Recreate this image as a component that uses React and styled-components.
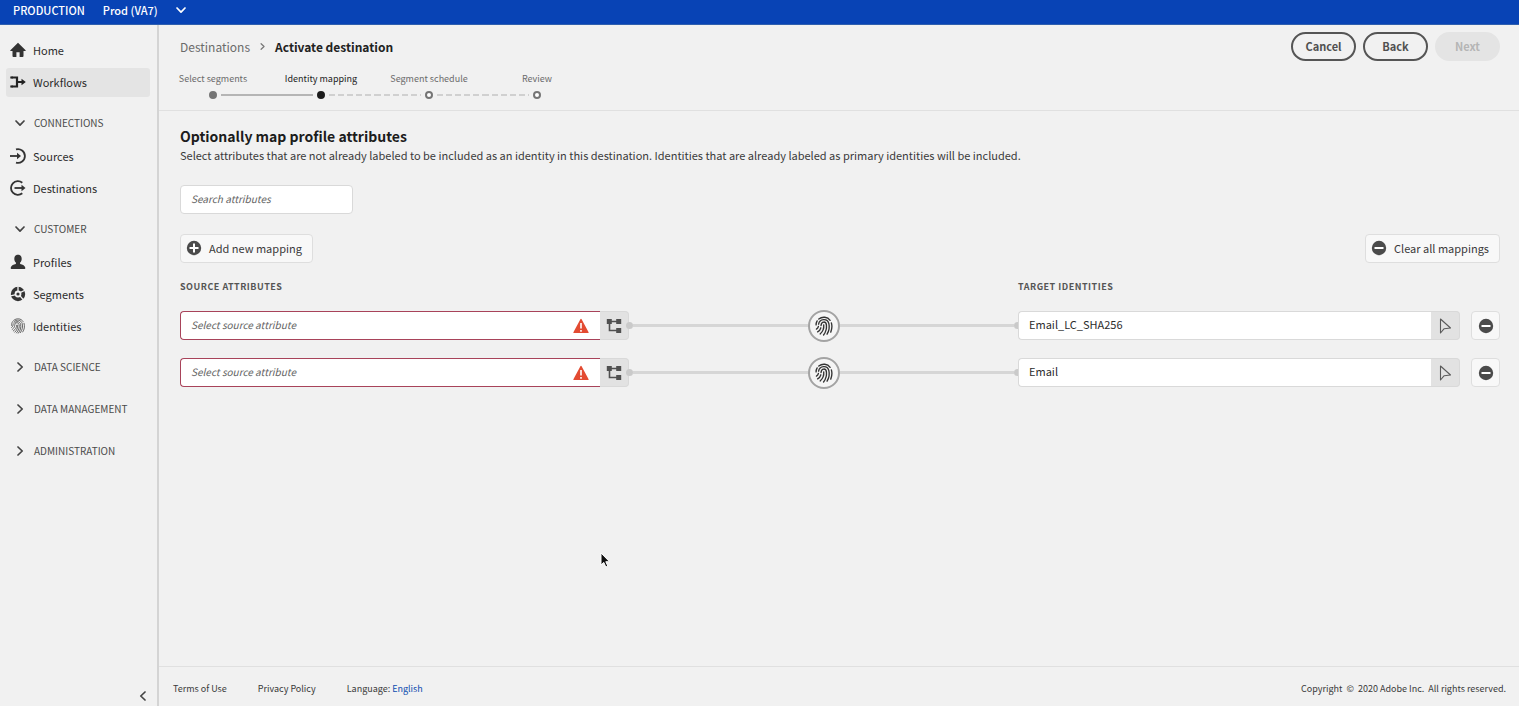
import React from "react";
import styled, { createGlobalStyle, css } from "styled-components";

const GlobalStyle = createGlobalStyle`
  * { box-sizing: border-box; }
  body {
    margin: 0;
    background: #f1f1f1;
    color: #3a3a3a;
    font-family: "Noto Sans CJK SC", "Noto Sans", sans-serif;
    font-size: 11px;
    line-height: 18px;
  }
  button, input { font: inherit; color: inherit; }
  button { cursor: pointer; }
  svg { display: block; flex: none; }
`;

const Page = styled.div`
  min-height: 100vh;
  display: flex;
  flex-direction: column;
`;

const TopBar = styled.header`
  display: flex;
  align-items: center;
  gap: 18px;
  height: 25px;
  padding: 0 13px 4px;
  background: #0843b5;
  border-bottom: 1px solid #2f5fae;
  color: #fff;
  font-weight: 500;
`;

const SandboxButton = styled.button`
  display: flex;
  align-items: center;
  gap: 18px;
  padding: 0;
  border: 0;
  background: none;
`;

const Body = styled.div`
  flex: 1;
  display: flex;
`;

const Sidebar = styled.nav`
  flex: none;
  display: flex;
  flex-direction: column;
  width: 159px;
  padding: 11px 7px 2px 6px;
  border-right: 2px solid #d4d4d4;
`;

const NavList = styled.ul`
  display: flex;
  flex-direction: column;
  gap: 3px;
  margin: 0;
  padding: 0 0 3px;
  list-style: none;
`;

const NavLink = styled.a`
  display: flex;
  align-items: center;
  gap: 7px;
  height: 29px;
  padding: 0 4px 2px;
  border-radius: 3px;
  background: ${(p) => (p.$active ? "#e4e4e4" : "transparent")};
  color: #2c2c2c;
  text-decoration: none;
`;

const SectionToggle = styled.button`
  display: flex;
  align-items: center;
  gap: 9px;
  width: 100%;
  height: 38px;
  margin-top: 4px;
  padding: 0 9px;
  border: 0;
  background: none;
  color: #4b4b4b;
  font-size: 10px;
  white-space: nowrap;
`;

const CollapseButton = styled.button`
  align-self: flex-end;
  margin-top: auto;
  padding: 3px 2px;
  border: 0;
  background: none;
`;

const Main = styled.div`
  flex: 1;
  min-width: 0;
  display: flex;
  flex-direction: column;
`;

const PageHeader = styled.div`
  display: flex;
  justify-content: space-between;
  padding: 7px 19px 11px 0;
  border-bottom: 1px solid #e0e0e0;
`;

const Breadcrumb = styled.div`
  display: flex;
  align-items: center;
  gap: 9px;
  height: 29px;
  padding-left: 21px;
`;

const CrumbLink = styled.a`
  color: #6b6b6b;
  font-size: 12px;
  text-decoration: none;
`;

const CrumbTitle = styled.h1`
  margin: 0;
  color: #222;
  font-size: 12px;
  line-height: 18px;
  font-weight: 700;
`;

const Stepper = styled.ol`
  display: flex;
  margin: 0;
  padding: 11px 0 0;
  list-style: none;
`;

const Step = styled.li`
  display: flex;
  flex-direction: column;
  align-items: center;
  gap: 5px;
  width: 108px;
  color: ${(p) => (p.$state === "current" ? "#222" : "#6b6b6b")};
  font-size: 9px;
  line-height: 14px;
  white-space: nowrap;
`;

const Track = styled.div`
  display: flex;
  align-items: center;
  gap: 4px;
  width: 100%;
`;

const lineFill = {
  none: "transparent",
  done: "#b5b5b5",
  todo: "repeating-linear-gradient(90deg, #d0d0d0 0 6px, transparent 6px 9px)",
};

const TrackLine = styled.span`
  flex: 1;
  height: 2px;
  background: ${(p) => lineFill[p.$kind]};
`;

const StepDot = styled.span`
  width: 8px;
  height: 8px;
  border: 2px solid ${(p) => (p.$state === "current" ? "#1c1c1c" : "#757575")};
  border-radius: 50%;
  background: ${(p) => ({ done: "#757575", current: "#1c1c1c", todo: "#fff" })[p.$state]};
`;

const Actions = styled.div`
  display: flex;
  gap: 7px;
`;

const PillButton = styled.button`
  width: 65px;
  height: 29px;
  padding: 0 0 1px;
  border: 2px solid #555;
  border-radius: 15px;
  background: transparent;
  color: #505050;
  font-weight: 700;
  &:disabled {
    border-color: #e4e4e4;
    background: #e4e4e4;
    color: #b5b5b5;
    cursor: default;
  }
`;

const Content = styled.main`
  flex: 1;
  padding: 15px 19px 24px 21px;
`;

const Title = styled.h2`
  margin: 0;
  color: #1c1c1c;
  font-size: 14px;
  line-height: 20px;
  font-weight: 700;
`;

const Description = styled.p`
  margin: 0;
`;

const field = css`
  height: 29px;
  padding: 0 10px 3px;
  border: 1px solid #d9d9d9;
  background: #fff;
  color: #2c2c2c;
  outline: 0;
  &::placeholder {
    color: #636363;
    font-size: 10px;
    font-style: italic;
    opacity: 1;
  }
`;

const SearchInput = styled.input`
  ${field}
  display: block;
  width: 173px;
  margin-top: 21px;
  border-radius: 4px;
`;

const Toolbar = styled.div`
  display: flex;
  justify-content: space-between;
  margin-top: 20px;
`;

const ToolButton = styled.button`
  display: flex;
  align-items: center;
  justify-content: center;
  gap: 7px;
  height: 29px;
  min-width: 29px;
  padding: ${(p) => (p.$square ? "0" : "0 10px 2px 5px")};
  border: 1px solid #dedede;
  border-radius: 4px;
  background: #f8f8f8;
  color: #3a3a3a;
`;

const MappingRow = styled.div`
  display: grid;
  grid-template-columns: minmax(0, 449fr) minmax(0, 389fr) minmax(0, 442fr) 40px;
  align-items: center;
  margin-top: 18px;
`;

const ColumnTitle = styled.h3`
  grid-column: ${(p) => p.$column};
  margin: 0;
  color: #555;
  font-size: 9px;
  line-height: 12px;
  font-weight: 700;
  letter-spacing: 0.5px;
`;

const FieldGroup = styled.div`
  display: flex;
`;

const InvalidBox = styled.div`
  flex: 1;
  min-width: 0;
  display: flex;
  align-items: center;
  height: 29px;
  padding-right: 11px;
  border: 1px solid #a8435a;
  border-right: 0;
  border-radius: 4px 0 0 4px;
  background: #fff;
`;

const SourceInput = styled.input`
  ${field}
  flex: 1;
  min-width: 0;
  height: 27px;
  border: 0;
  background: transparent;
`;

const TargetInput = styled.input`
  ${field}
  flex: 1;
  min-width: 0;
  border-right: 0;
  border-radius: 4px 0 0 4px;
`;

const PickerButton = styled.button`
  display: flex;
  align-items: center;
  justify-content: center;
  width: 29px;
  height: 29px;
  padding: 0;
  border: 1px solid #d9d9d9;
  border-left: 0;
  border-radius: 0 4px 4px 0;
  background: #e2e2e2;
`;

const Connector = styled.div`
  display: flex;
  align-items: center;
  margin: -2px -3px;
`;

const ConnectorLine = styled.span`
  flex: 1;
  height: 3px;
  background: #d6d6d6;
`;

const ConnectorEnd = styled.span`
  width: 7px;
  height: 7px;
  border-radius: 50%;
  background: #cacaca;
`;

const ConnectorBadge = styled.span`
  display: flex;
  align-items: center;
  justify-content: center;
  width: 32px;
  height: 32px;
  border: 2px solid #a3a3a3;
  border-radius: 50%;
  background: #f5f5f5;
`;

const RemoveCell = styled.div`
  display: flex;
  justify-content: flex-end;
`;

const Footer = styled.footer`
  display: flex;
  align-items: center;
  gap: 31px;
  height: 40px;
  padding: 4px 13px 0 14px;
  border-top: 1px solid #e0e0e0;
  font-size: 9px;
`;

const FooterLink = styled.a`
  color: ${(p) => (p.$accent ? "#0f4db0" : "inherit")};
  text-decoration: none;
`;

const Copyright = styled.span`
  margin-left: auto;
`;

const Pointer = styled.svg`
  position: absolute;
  left: 599px;
  top: 551px;
  pointer-events: none;
`;

const Chevron = ({ dir = "down", size = 10, color = "#444", width = 1.7 }) => {
  const d = {
    down: "M1 3 5 7.200 9 3",
    right: "M3 1 7.200 5 3 9",
    left: "M7 1 2.800 5 7 9",
  }[dir];
  return (
    <svg width={size} height={size} viewBox="0 0 10 10" fill="none" stroke={color} strokeWidth={width} strokeLinecap="round" strokeLinejoin="round" aria-hidden="true">
      <path d={d} />
    </svg>
  );
};

const Icon = ({ size = 16, children }) => (
  <svg width={size} height={size} viewBox="0 0 16 16" fill="#333" aria-hidden="true">
    {children}
  </svg>
);

const HomeIcon = () => (
  <Icon>
    <path d="M8 .8.400 8.300c-.3.4-.1.8.4.8H2.500V14c0 .6.300.9.9.9h3V10.200h3.200v4.700h3c.6 0 .9-.3.9-.9V9.100h1.700c.5 0 .7-.4.4-.8Z" />
  </Icon>
);

const WorkflowIcon = () => (
  <Icon>
    <path d="M1.500 3.500H7v9H1.500M7 8h5" fill="none" stroke="#222" strokeWidth="2.200" />
    <path d="M11.500 4.800 15.800 8 11.500 11.200ZM.3 2.400h2.500v2.200H.3Zm0 9h2.500v2.200H.3Z" fill="#222" />
  </Icon>
);

const SourcesIcon = () => (
  <Icon>
    <path d="M6 1.400A6.900 6.900 0 1 1 6 14.600" fill="none" stroke="#333" strokeWidth="1.800" />
    <path d="M0 8h8" stroke="#333" strokeWidth="1.800" />
    <path d="m7 4.700 4 3.300-4 3.300Z" />
  </Icon>
);

const DestinationsIcon = () => (
  <Icon>
    <path d="M12.300 2.700A6.900 6.900 0 1 0 12.300 13.300" fill="none" stroke="#333" strokeWidth="1.800" />
    <path d="M4.500 8h8" stroke="#333" strokeWidth="1.800" />
    <path d="m11.500 4.700 4 3.300-4 3.300Z" />
  </Icon>
);

const ProfileIcon = () => (
  <Icon>
    <path d="M8 .8c2.300 0 3.700 1.600 3.700 3.900 0 1.600-.6 3-1.600 3.900v1.300c2.600.5 5 1.700 5.200 3.800v.6c0 .4-.3.700-.7.700H1.400c-.4 0-.7-.3-.7-.7v-.6c.2-2.100 2.600-3.300 5.200-3.800V8.600c-1-.9-1.600-2.300-1.600-3.900C4.300 2.400 5.700.8 8 .8Z" />
  </Icon>
);

const SegmentsIcon = () => (
  <Icon>
    <circle cx="8" cy="8" r="5.300" fill="none" stroke="#333" strokeWidth="3.800" />
    <path d="M8 5V0M10 6.600l5.500-2.600M10 9.800l3.600 4.200M6 8.600.5 9.800" fill="none" stroke="#f1f1f1" strokeWidth="1.300" />
    <circle cx="8" cy="8" r="1.600" />
  </Icon>
);

const IdentitiesIcon = () => (
  <svg width="16" height="16" viewBox="0 0 20 22" fill="none" stroke="#444" strokeWidth="1.100" strokeLinecap="round" aria-hidden="true">
    <path d="M4 3.200C8-.1 14.300.3 17 4.800M18.300 7.200c1.300 4.300.5 8.800-1.800 12" />
    <path d="M1.200 10.200c-.1-2 .3-3.700 1.300-5.200M4.300 5.300c3.800-4.100 10.100-2.800 11.500 2.400 1.100 4.300.2 8.800-2.600 12.500" />
    <path d="M1.300 13c2-1.300 1.800-3.300 2.100-5M5 6.900c2.900-3.300 7.700-2.300 8.600 1.700.9 4.300-.3 8.700-3.200 12.300" />
    <path d="M2 15.700c3.800-2.500 3.200-4.900 3.700-6.800 1-3.200 5-3 5.800.2.900 3.600-.5 8.200-3.600 11.400" />
    <path d="M3.500 17.800c4-2.900 4.400-5.200 4.500-7.500 0-1.200 1.400-1.100 1.500 0 .3 3.300-1 6.700-3.900 9.200" />
  </svg>
);

const FingerprintIcon = () => (
  <svg width="18" height="20" viewBox="0 0 20 22" fill="none" stroke="#333" strokeWidth="1.500" strokeLinecap="round" aria-hidden="true">
    <path d="M4.200 3.200C8 .2 14 .6 16.800 4.700M18.200 7.500c1 3.500.6 7.200-.7 10.300" />
    <path d="M1.200 9.800c0-1.700.4-3.200 1.200-4.500M4 9C5 2.600 13.800 2 15.400 8.300c1 4.200.1 8.300-2 11.800" />
    <path d="M3.800 11.500c-.2 1.200-.9 2.200-2.200 3M6.700 10.500c.2-5 5.600-5.200 6 -.5.4 4.100-.8 7.900-3.200 11" />
    <path d="M6.500 13c-.5 1.900-1.700 3.400-3.600 4.500M9.700 9.800c.4 3.900-1.100 7.500-4 10" />
  </svg>
);

const CircleIcon = ({ plus }) => (
  <Icon>
    <circle cx="8" cy="8" r="7.200" fill="#4b4b4b" />
    <path d={plus ? "M3.500 8h9M8 3.500v9" : "M3.500 8h9"} stroke="#fff" strokeWidth="2" />
  </Icon>
);

const AlertIcon = () => (
  <Icon>
    <path d="M8 .8c.3 0 .5.200.6.400l7 13c.2.400 0 .8-.5.8H.9c-.5 0-.7-.4-.5-.8l7-13c.1-.2.300-.4.6-.4Z" fill="#e34b32" />
    <path d="M8 5v5.500M8 12v1.700" stroke="#fff" strokeWidth="1.600" />
  </Icon>
);

const TreeIcon = () => (
  <Icon>
    <path d="M3.500 3.500h9M3.500 3.500v9h9" fill="none" stroke="#505050" strokeWidth="1.600" />
    <path d="M.8 1h5v5h-5Zm9.400 0h5v5h-5Zm0 9h5v5h-5Z" fill="#505050" />
  </Icon>
);

const SelectIcon = () => (
  <Icon>
    <path d="M3.500 1v14l3.700-4.300 6.300-.7Z" fill="none" stroke="#5a5a5a" strokeWidth="1.100" strokeLinejoin="round" />
  </Icon>
);

const navSections = [
  { title: "CONNECTIONS", items: [["Sources", SourcesIcon], ["Destinations", DestinationsIcon]] },
  { title: "CUSTOMER", items: [["Profiles", ProfileIcon], ["Segments", SegmentsIcon], ["Identities", IdentitiesIcon]] },
  { title: "DATA SCIENCE" },
  { title: "DATA MANAGEMENT" },
  { title: "ADMINISTRATION" },
];

const steps = [
  { label: "Select segments", state: "done", before: "none", after: "done" },
  { label: "Identity mapping", state: "current", before: "done", after: "todo" },
  { label: "Segment schedule", state: "todo", before: "todo", after: "todo" },
  { label: "Review", state: "todo", before: "todo", after: "none" },
];

const NavItem = ({ label, icon: Glyph, active }) => (
  <li>
    <NavLink href="#" $active={active} aria-current={active ? "page" : undefined}>
      <Glyph />
      {label}
    </NavLink>
  </li>
);

const Mapping = ({ target }) => (
  <MappingRow>
    <FieldGroup>
      <InvalidBox>
        <SourceInput placeholder="Select source attribute" aria-label={`Source attribute for ${target}`} aria-invalid="true" />
        <AlertIcon />
      </InvalidBox>
      <PickerButton aria-label="Browse source attributes"><TreeIcon /></PickerButton>
    </FieldGroup>
    <Connector>
      <ConnectorEnd />
      <ConnectorLine />
      <ConnectorBadge><FingerprintIcon /></ConnectorBadge>
      <ConnectorLine />
      <ConnectorEnd />
    </Connector>
    <FieldGroup>
      <TargetInput defaultValue={target} aria-label="Target identity" />
      <PickerButton aria-label="Select target identity"><SelectIcon /></PickerButton>
    </FieldGroup>
    <RemoveCell>
      <ToolButton $square aria-label={`Remove ${target} mapping`}><CircleIcon /></ToolButton>
    </RemoveCell>
  </MappingRow>
);

export default function App() {
  return (
    <Page>
      <GlobalStyle />
      <TopBar>
        <span>PRODUCTION</span>
        <SandboxButton>
          Prod (VA7)
          <Chevron color="#fff" />
        </SandboxButton>
      </TopBar>
      <Body>
        <Sidebar>
          <NavList>
            <NavItem label="Home" icon={HomeIcon} />
            <NavItem label="Workflows" icon={WorkflowIcon} active />
          </NavList>
          {navSections.map(({ title, items }) => (
            <React.Fragment key={title}>
              <SectionToggle aria-expanded={Boolean(items)}>
                <Chevron dir={items ? "down" : "right"} />
                {title}
              </SectionToggle>
              {items && (
                <NavList>
                  {items.map(([label, icon]) => <NavItem key={label} label={label} icon={icon} />)}
                </NavList>
              )}
            </React.Fragment>
          ))}
          <CollapseButton aria-label="Collapse navigation"><Chevron dir="left" /></CollapseButton>
        </Sidebar>
        <Main>
          <PageHeader>
            <div>
              <Breadcrumb>
                <CrumbLink href="#">Destinations</CrumbLink>
                <Chevron dir="right" size={7} color="#777" />
                <CrumbTitle>Activate destination</CrumbTitle>
              </Breadcrumb>
              <Stepper>
                {steps.map(({ label, state, before, after }) => (
                  <Step key={label} $state={state}>
                    {label}
                    <Track>
                      <TrackLine $kind={before} />
                      <StepDot $state={state} />
                      <TrackLine $kind={after} />
                    </Track>
                  </Step>
                ))}
              </Stepper>
            </div>
            <Actions>
              <PillButton>Cancel</PillButton>
              <PillButton>Back</PillButton>
              <PillButton disabled>Next</PillButton>
            </Actions>
          </PageHeader>
          <Content>
            <Title>Optionally map profile attributes</Title>
            <Description>
              Select attributes that are not already labeled to be included as an identity in this destination. Identities that are already labeled as primary identities will be included.
            </Description>
            <SearchInput type="search" placeholder="Search attributes" aria-label="Search attributes" />
            <Toolbar>
              <ToolButton><CircleIcon plus />Add new mapping</ToolButton>
              <ToolButton><CircleIcon />Clear all mappings</ToolButton>
            </Toolbar>
            <MappingRow>
              <ColumnTitle $column="1">SOURCE ATTRIBUTES</ColumnTitle>
              <ColumnTitle $column="3">TARGET IDENTITIES</ColumnTitle>
            </MappingRow>
            <Mapping target="Email_LC_SHA256" />
            <Mapping target="Email" />
          </Content>
          <Footer>
            <FooterLink href="#">Terms of Use</FooterLink>
            <FooterLink href="#">Privacy Policy</FooterLink>
            <span>Language: <FooterLink href="#" $accent>English</FooterLink></span>
            <Copyright>Copyright &nbsp;© &nbsp;2020 Adobe Inc. &nbsp;All rights reserved.</Copyright>
          </Footer>
        </Main>
      </Body>
      <Pointer width="12" height="18" viewBox="0 0 12 18" aria-hidden="true">
        <path d="M2 2v12l2.800-2.600L6.800 16l2-.9-2-4.400h3.700Z" fill="#111" stroke="#fff" strokeWidth="1" />
      </Pointer>
    </Page>
  );
}
